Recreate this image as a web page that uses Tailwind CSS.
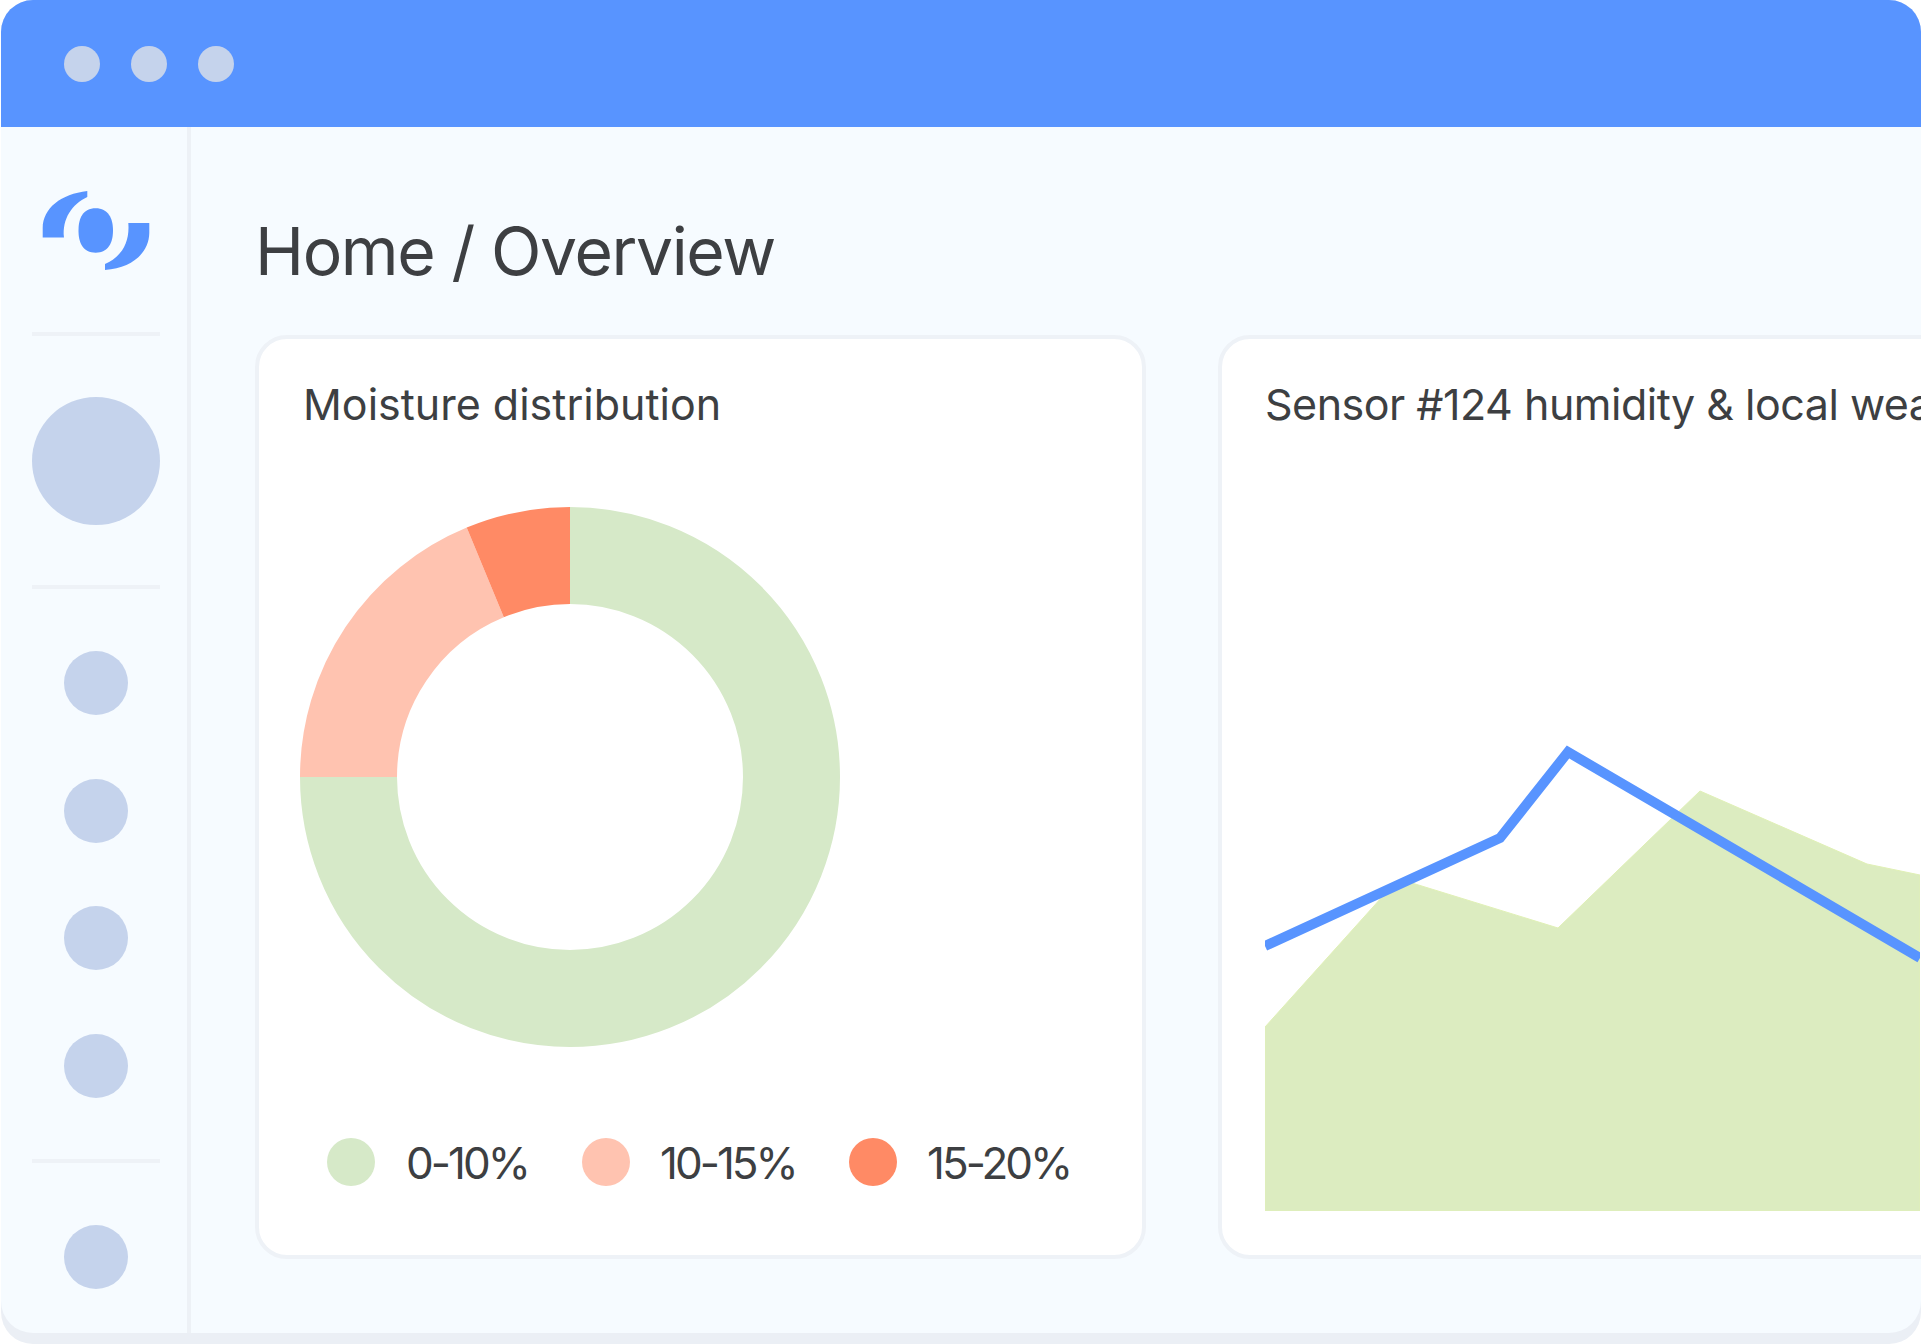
<!DOCTYPE html>
<html>
<head>
<meta charset="utf-8">
<script src="https://cdn.jsdelivr.net/npm/@tailwindcss/browser@4"></script>
</head>
<body class="bg-white overflow-hidden font-['Inter',sans-serif] text-[#3d3f42]">
<div class="w-[1920px] h-[1344px] ml-px rounded-[32px] bg-[#ebeff5] overflow-hidden flex flex-col pb-[11px]">
  <header class="h-[127px] shrink-0 bg-[#5894ff] flex items-center gap-[31px] pl-[63px]">
    <span class="w-9 h-9 rounded-full bg-[#c5d3ec]"></span>
    <span class="w-9 h-9 rounded-full bg-[#c5d3ec]"></span>
    <span class="w-9 h-9 rounded-full bg-[#c5d3ec]"></span>
  </header>
  <div class="flex-1 flex bg-[#f6fbff] rounded-b-[32px] overflow-hidden">
    <aside class="w-[190px] shrink-0 pl-1 border-r-4 border-[#edf1f6] flex flex-col items-center">
      <svg class="mt-[63px] block" width="108" height="80" viewBox="42 190 108 80" fill="#5894ff">
        <path d="M87.3 191C61 194 43 208 42.7 228V237.5H64C62 219 72 204 87.3 197Z"/>
        <path d="M95.7 208.3C108 208.3 113 218 113 230.5C113 243 108 252.7 95.7 252.7C83 252.7 78.5 243 78.5 230.5C78.5 218 83 208.3 95.7 208.3Z"/>
        <path d="M149.3 223H128.3C130 243 121 257 105 264V270C132 268 149 253 149.3 233Z"/>
      </svg>
      <div class="mt-[62px] w-32 h-1 bg-[#eef2f7]"></div>
      <div class="mt-[61px] w-32 h-32 rounded-full bg-[#c5d3ec]"></div>
      <div class="mt-[60px] w-32 h-1 bg-[#eef2f7]"></div>
      <div class="mt-[62px] flex flex-col gap-[63.5px]">
        <div class="w-16 h-16 rounded-full bg-[#c5d3ec]"></div>
        <div class="w-16 h-16 rounded-full bg-[#c5d3ec]"></div>
        <div class="w-16 h-16 rounded-full bg-[#c5d3ec]"></div>
        <div class="w-16 h-16 rounded-full bg-[#c5d3ec]"></div>
      </div>
      <div class="mt-[61px] w-32 h-1 bg-[#eef2f7]"></div>
      <div class="mt-[62px] w-16 h-16 rounded-full bg-[#c5d3ec]"></div>
    </aside>
    <main class="flex-1 min-w-0 pl-[64px] overflow-hidden">
      <h1 class="h-[208px] pt-[84px] text-[66px] leading-[80px] font-normal tracking-[-1.4px] whitespace-nowrap">Home / Overview</h1>
      <div class="flex gap-[72px] w-[1800px]">
        <section class="w-[891px] h-[924px] shrink-0 bg-white border-4 border-[#eef2f7] rounded-[32px] pl-[44px] pt-[37px]">
          <h2 class="text-[43px] leading-[56px] font-normal whitespace-nowrap">Moisture distribution</h2>
          <svg class="block mt-[75px] ml-[-3px]" width="540" height="540" viewBox="0 0 540 540" fill="none">
            <g transform="rotate(-90 270 270)" stroke-width="97">
              <circle cx="270" cy="270" r="221.5" stroke="#d6e9c8" pathLength="100" stroke-dasharray="75 25"/>
              <circle cx="270" cy="270" r="221.5" stroke="#ffc3b0" pathLength="100" stroke-dasharray="18.75 81.25" stroke-dashoffset="-75"/>
              <circle cx="270" cy="270" r="221.5" stroke="#ff8a65" pathLength="100" stroke-dasharray="6.25 93.75" stroke-dashoffset="-93.75"/>
            </g>
          </svg>
          <div class="mt-[90px] ml-6 flex items-center text-[44px] leading-[48px] tracking-[-3px] whitespace-nowrap">
            <span class="w-12 h-12 rounded-full bg-[#d6e9c8]"></span>
            <span class="ml-[31px] w-[176px] pt-[2px]">0-10%</span>
            <span class="w-12 h-12 rounded-full bg-[#ffc3b0]"></span>
            <span class="ml-[30px] w-[189px] pt-[2px]">10-15%</span>
            <span class="w-12 h-12 rounded-full bg-[#ff8a65]"></span>
            <span class="ml-[30px] pt-[2px]">15-20%</span>
          </div>
        </section>
        <section class="w-[900px] h-[924px] shrink-0 bg-white border-4 border-[#eef2f7] rounded-[32px] pl-[43px] pt-[37px] overflow-hidden">
          <h2 class="text-[43px] leading-[56px] font-normal tracking-[-0.5px] whitespace-nowrap">Sensor #124 humidity &amp; local weather</h2>
          <svg class="block mt-[308px]" width="655" height="471" viewBox="1266 740 655 471" fill="none">
            <path d="M1266 1027L1392 887L1413 883L1559 928L1701 791L1868 864L1921 875V1211H1266Z" fill="#dcecc0" stroke="#e0f0b6" stroke-width="1"/>
            <path d="M1266 946L1501 838L1569 752L1921 958" stroke="#5894ff" stroke-width="10" stroke-miterlimit="10"/>
          </svg>
        </section>
      </div>
    </main>
  </div>
</div>
</body>
</html>
